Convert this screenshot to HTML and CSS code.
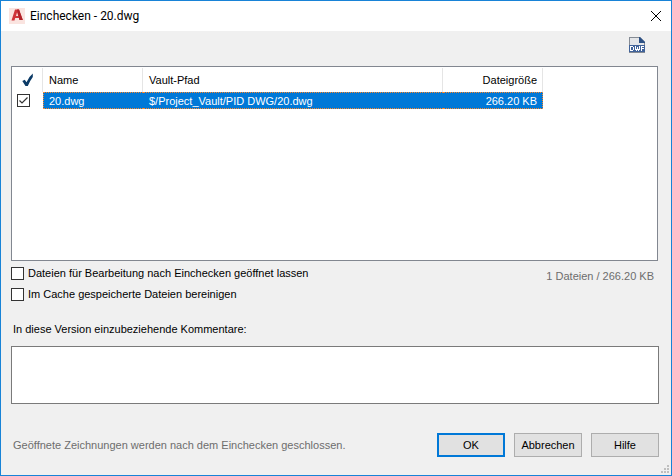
FILE: index.html
```
<!DOCTYPE html>
<html lang="de">
<head>
<meta charset="utf-8">
<title>Einchecken - 20.dwg</title>
<link rel="stylesheet" href="styles.css">
</head>
<body>
<main class="dialog">
  <header class="titlebar">
    <svg class="app-icon" width="16" height="16" viewBox="0 0 16 16" aria-hidden="true">
      <rect width="16" height="16" fill="#fae4e0"/>
      <path d="M2.500 12.500 6 1.500h4l3.800 10.500H10.500L10 10H6.200l-.7 2.500z" fill="#d0343a"/>
      <path d="M7 8h2.200L8.100 4.200z" fill="#fae4e0"/>
      <path d="M8 1.500h2l3.800 10.500H10.500z" fill="#b0232a"/>
    </svg>
    <h1 class="title">Einchecken - 20.dwg</h1>
    <button class="close" type="button" aria-label="Schließen">
      <svg width="12" height="12" viewBox="0 0 12 12"><path d="M1 1l10 10M11 1L1 11" stroke="#000" stroke-width="1" fill="none"/></svg>
    </button>
  </header>

  <form class="content">
    <div class="toolbar">
      <button class="dwf" type="button" aria-label="DWF">
        <svg width="16" height="16" viewBox="0 0 16 16">
          <path d="M0 0h11l5 5v11H0z" fill="#858b94"/>
          <path d="M1 1h9v5h5v2H1z" fill="#e4e6e9"/>
          <path d="M10 0h1l5 5v1h-6z" fill="#2d5185"/>
          <path d="M0 8h16v7H0z" fill="#41639a"/>
          <path d="M1 9h3v1h1v3H4v1H1zM6 9h1v3h1v-2h1v2h1V9h1v4h-1v1H9v-1H8v1H7v-1H6zM12 9h3v1h-2v1h2v1h-2v2h-1z" fill="#fff"/>
          <path d="M2 10h2v3H2z" fill="#41639a"/>
        </svg>
      </button>
    </div>

    <div class="list">
      <table class="files">
        <colgroup><col class="c-check"><col class="c-name"><col class="c-path"><col class="c-size"></colgroup>
        <thead>
          <tr>
            <th class="check" aria-label="Ausgewählt">
              <svg width="12" height="14" viewBox="0 0 12 14" aria-hidden="true"><path d="M.3 8 2.800 6.700l1.700 2.600Q7 3.500 10.800.5V4Q7.800 8 5.800 13H3.500z" fill="#0b3a66"/></svg>
            </th>
            <th>Name</th>
            <th>Vault-Pfad</th>
            <th class="size">Dateigröße</th>
          </tr>
        </thead>
        <tbody>
          <tr>
            <td class="check"><input class="box" type="checkbox" checked aria-label="20.dwg"></td>
            <td class="sel first">20.dwg</td>
            <td class="sel">$/Project_Vault/PID DWG/20.dwg</td>
            <td class="sel last size">266.20 KB</td>
          </tr>
        </tbody>
      </table>
    </div>

    <div class="below">
      <div class="options">
        <label class="option"><input class="box" type="checkbox">Dateien für Bearbeitung nach Einchecken geöffnet lassen</label>
        <label class="option"><input class="box" type="checkbox">Im Cache gespeicherte Dateien bereinigen</label>
      </div>
      <p class="summary">1 Dateien / 266.20 KB</p>
    </div>

    <label class="comment-label" for="comment">In diese Version einzubeziehende Kommentare:</label>
    <textarea class="comment" id="comment"></textarea>

    <footer class="footer">
      <p class="note">Geöffnete Zeichnungen werden nach dem Einchecken geschlossen.</p>
      <button class="button default" type="submit">OK</button>
      <button class="button" type="button">Abbrechen</button>
      <button class="button" type="button">Hilfe</button>
    </footer>
  </form>
  <svg class="grip" width="8" height="8" viewBox="0 0 8 8" aria-hidden="true"><path d="M6 0h2v2H6zM3 3h2v2H3zM6 3h2v2H6zM0 6h2v2H0zM3 6h2v2H3zM6 6h2v2H6z" fill="#bfbfbf"/></svg>
</main>
</body>
</html>
```
FILE: styles.css
```
* {
  box-sizing: border-box;
}

body {
  margin: 0;
  color: #000;
  font: 11px/16px "Liberation Sans", sans-serif;
}

button,
textarea {
  font: inherit;
  color: inherit;
}

p {
  margin: 0;
}

svg {
  display: block;
}

.dialog {
  position: relative;
  display: flex;
  flex-direction: column;
  min-height: 100vh;
  border: 1px solid #1883d7;
  background: #f0f0f0;
}

.titlebar {
  display: flex;
  align-items: center;
  height: 30px;
  padding: 0 9px 0 8px;
  background: #fff;
}

.app-icon {
  margin-right: 5px;
}

.title {
  flex: 1;
  margin: 0;
  font: 12px/16px Roboto, sans-serif;
}

.close,
.dwf {
  padding: 0;
  border: 0;
  background: none;
}

.content {
  display: flex;
  flex: 1;
  flex-direction: column;
  padding: 0 12px 18px 10px;
}

.toolbar {
  display: flex;
  justify-content: flex-end;
  padding: 6px 14px 13px 0;
}

.list {
  flex: 1;
  margin-right: 1px;
  padding-top: 1px;
  border: 1px solid #828790;
  background: #fff;
}

.files {
  width: 531px;
  table-layout: fixed;
  border-collapse: separate;
  border-spacing: 0;
}

.c-check { width: 31px; }
.c-name { width: 100px; }
.c-path { width: 300px; }
.c-size { width: 100px; }

.files th {
  height: 24px;
  padding: 0 6px;
  border-right: 1px solid #e5e5e5;
  font-weight: 400;
  text-align: left;
}

.files td {
  height: 17px;
  padding: 1px 6px 0;
  line-height: 14px;
}

.files .size {
  padding-right: 5px;
  text-align: right;
}

.files .check {
  padding: 0 0 0 10px;
}

.files td.check {
  padding-left: 5px;
}

.files .sel {
  border: 1px dotted #ff8728;
  border-width: 1px 0;
  background: #0078d7;
  color: #fff;
}

.files .first {
  padding-left: 5px;
  border-left-width: 1px;
}

.files .last {
  border-right-width: 1px;
}

.box {
  display: block;
  flex: none;
  width: 13px;
  height: 13px;
  margin: 0;
  appearance: none;
  border: 1px solid #333;
  background: #fff;
}

.box:checked {
  background: #fff url("data:image/svg+xml,%3Csvg xmlns='http://www.w3.org/2000/svg' viewBox='0 0 11 11'%3E%3Cpath d='M1.500 5.500l2.500 2.500 5.500-5.500' fill='none' stroke='%23333' stroke-width='1.200'/%3E%3C/svg%3E");
}

.below {
  display: flex;
  justify-content: space-between;
  padding: 4px 5px 0 0;
}

.options {
  display: grid;
  gap: 5px;
}

.option {
  display: flex;
  align-items: center;
  gap: 4px;
}

.summary {
  padding-top: 3px;
  color: #6d6d6d;
}

.comment-label {
  margin: 19px 2px 9px;
}

.comment {
  display: block;
  height: 58px;
  border: 1px solid #7a7a7a;
  background: #fff;
  resize: none;
}

.footer {
  display: flex;
  align-items: center;
  gap: 9px;
  padding-top: 29px;
}

.note {
  flex: 1;
  padding-left: 2px;
  color: #6d6d6d;
}

.button {
  width: 68px;
  height: 24px;
  padding: 0;
  border: 1px solid #adadad;
  background: #e1e1e1;
}

.button.default {
  border: 2px solid #0078d7;
}

.grip {
  position: absolute;
  right: 2px;
  bottom: 2px;
}
```
